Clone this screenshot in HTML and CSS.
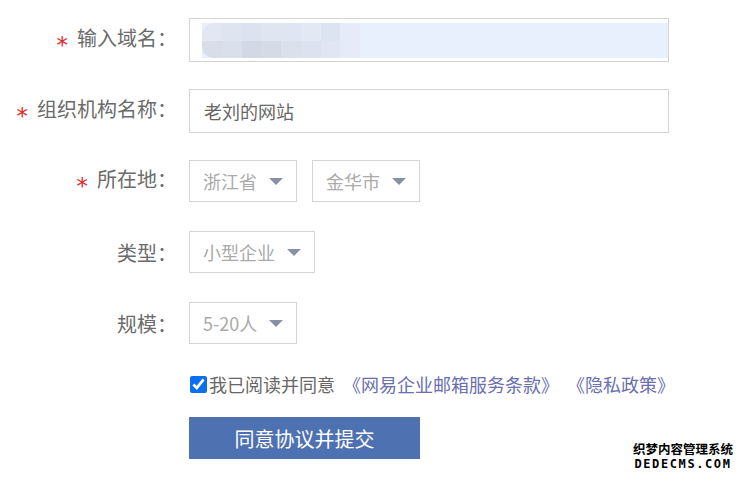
FILE: index.html
```html
<!DOCTYPE html>
<html lang="zh-CN">
<head>
  <meta charset="UTF-8">
  <title>企业邮箱注册</title>
  <link rel="stylesheet" href="styles.css">
</head>
<body>

  <form class="reg-form">
    <!-- 域名 -->
    <div class="row">
      <label class="label"><span class="req">*</span>输入域名：</label>
      <div class="field">
        <div class="autofill">
          <div class="mosaic">
            <div class="m-row">
              <i style="background:#e2e7f3"></i><i style="background:#dfe4f1"></i><i style="background:#dce2ef"></i><i style="background:#e0e5f2"></i><i style="background:#dfe5f2"></i><i style="background:#e3e8f5"></i><i style="background:#dce3f1"></i><i style="background:#e5ebf8"></i>
            </div>
            <div class="m-row">
              <i style="background:#d8dde9"></i><i style="background:#d9dfeb"></i><i style="background:#d2d8e5"></i><i style="background:#d4dae6"></i><i style="background:#dbe0ed"></i><i style="background:#dce2ef"></i><i style="background:#e0e6f3"></i><i style="background:#e5ebf8"></i>
            </div>
          </div>
        </div>
      </div>
    </div>

    <!-- 组织机构 -->
    <div class="row">
      <label class="label"><span class="req">*</span>组织机构名称：</label>
      <div class="field">
        <span class="field-text">老刘的网站</span>
      </div>
    </div>

    <!-- 所在地 -->
    <div class="row row-select">
      <label class="label"><span class="req">*</span>所在地：</label>
      <div class="controls">
        <div class="select"><span>浙江省</span><b class="caret"></b></div>
        <div class="select"><span>金华市</span><b class="caret"></b></div>
      </div>
    </div>

    <div class="row row-select">
      <label class="label">类型：</label>
      <div class="controls">
        <div class="select"><span>小型企业</span><b class="caret"></b></div>
      </div>
    </div>

    <div class="row row-select">
      <label class="label">规模：</label>
      <div class="controls">
        <div class="select"><span>5-20人</span><b class="caret"></b></div>
      </div>
    </div>

    <div class="agree">
      <input type="checkbox" id="agree" checked>
      <label for="agree">我已阅读并同意</label>
      <a href="#">《网易企业邮箱服务条款》</a>
      <a href="#">《隐私政策》</a>
    </div>

    <div class="actions">
      <button type="button" class="submit">同意协议并提交</button>
    </div>
  </form>

  <div class="watermark">
    <div class="wm-cn">织梦内容管理系统</div>
    <div class="wm-en">DEDECMS.COM</div>
  </div>

</body>
</html>
```

FILE: styles.css
```css
* {
  box-sizing: border-box;
}

body {
  margin: 0;
  padding: 18px 0 0;
  font-family: "Noto Sans CJK SC", "Noto Sans", sans-serif;
  background: #fff;
  color: #666;
  width: 741px;
  height: 477px;
  overflow: hidden;
  position: relative;
}

.row {
  display: flex;
  align-items: center;
  height: 44px;
  margin-bottom: 27px;
}

.row-select {
  height: 42px;
  margin-bottom: 29px;
}

.label {
  width: 177px;
  margin-right: 12px;
  text-align: right;
  font-size: 20px;
  color: #6b6b6b;
  white-space: nowrap;
}

.req {
  color: #e3262a;
  font-family: "DejaVu Sans", sans-serif;
  font-size: 23px;
  margin-right: 9px;
  vertical-align: -7px;
  line-height: 1;
}

.controls {
  display: flex;
  gap: 15px;
}

.field {
  width: 480px;
  height: 44px;
  border: 1px solid #d4d4d4;
  display: flex;
  align-items: center;
}

.field-text {
  padding-left: 14px;
  font-size: 18px;
  color: #666;
}

.autofill {
  margin: 4px 0 3px 12px;
  height: 35px;
  flex: 1;
  align-self: flex-start;
  background: #e8f0fe;
}

.mosaic {
  width: 158px;
  height: 35px;
  border-radius: 12px 0 0 12px;
  overflow: hidden;
  display: flex;
  flex-direction: column;
}

.m-row {
  flex: 1;
  display: flex;
}

.m-row i {
  flex: 1;
}

.select {
  height: 42px;
  border: 1px solid #d4d4d4;
  display: flex;
  align-items: center;
  padding: 0 13px 0 13px;
  font-size: 18px;
  color: #aaa;
}

.caret {
  margin-left: 12px;
  width: 0;
  height: 0;
  border-left: 7px solid transparent;
  border-right: 7px solid transparent;
  border-top: 7px solid #8791a5;
}

.agree {
  display: flex;
  align-items: center;
  margin-left: 189px;
  margin-top: 9px;
  font-size: 18px;
  height: 22px;
  color: #666;
}

.agree input {
  width: 17px;
  height: 17px;
  margin: 0 2px 0 1px;
  accent-color: #0b6ff2;
}

.agree a {
  margin-left: 8px;
  color: #6a6fae;
  text-decoration: none;
}

.actions {
  margin: 22px 0 0 189px;
}

.submit {
  width: 231px;
  height: 42px;
  border: none;
  background: #4e72b1;
  color: #fff;
  font-family: inherit;
  font-size: 20px;
  padding: 0;
  cursor: pointer;
}

/* watermark, sits over the page corner */
.watermark {
  position: absolute;
  right: 8px;
  bottom: 7px;
  text-align: center;
  color: #000;
  font-weight: bold;
  text-shadow: 1px 0 #fff, -1px 0 #fff, 0 1px #fff, 0 -1px #fff;
}

.wm-cn {
  font-size: 12.5px;
  line-height: 15px;
}

.wm-en {
  margin-top: 3px;
  font-family: "DejaVu Sans Mono", monospace;
  font-size: 12px;
  line-height: 11px;
  letter-spacing: 1.6px;
}
```
